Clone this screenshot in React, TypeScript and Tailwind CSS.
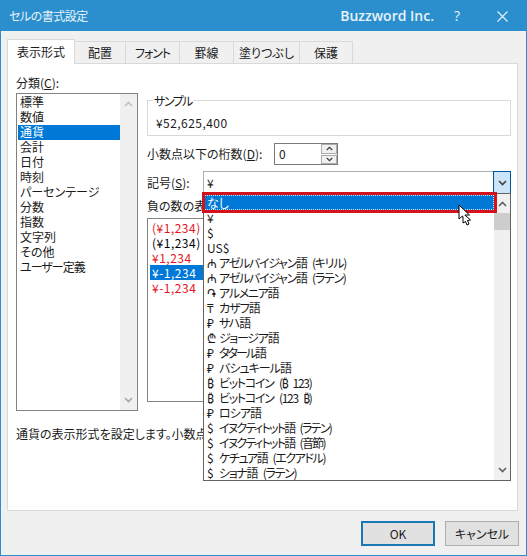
const TABS = [
  { label: '配置', width: 'w-[52px]', tracking: '' },
  { label: 'フォント', width: 'w-[55px]', tracking: 'tracking-[-1px]' },
  { label: '罫線', width: 'w-[55px]', tracking: '' },
  { label: '塗りつぶし', width: 'w-[67px]', tracking: '' },
  { label: '保護', width: 'w-[54px]', tracking: '' },
];

const CATEGORIES = ['標準', '数値', '通貨', '会計', '日付', '時刻', 'パーセンテージ', '分数', '指数', '文字列', 'その他', 'ユーザー定義'];

const NEGATIVES = [
  { label: '(¥1,234)', className: 'text-[#e81123]' },
  { label: '(¥1,234)', className: 'text-black' },
  { label: '¥1,234', className: 'text-[#e81123]' },
  { label: '¥-1,234', className: 'bg-[#0078d7] text-white' },
  { label: '¥-1,234', className: 'text-[#e81123]' },
];

const PLAIN_SYMBOLS = ['¥', '$', 'US$'];

const SYMBOLS = [
  { symbol: '₼', name: 'アゼルバイジャン語 (キリル)', tracking: 'tracking-[-1.3px]' },
  { symbol: '₼', name: 'アゼルバイジャン語 (ラテン)', tracking: 'tracking-[-1.3px]' },
  { symbol: '֏', name: 'アルメニア語', tracking: 'tracking-[-1.3px]' },
  { symbol: '₸', name: 'カザフ語', tracking: 'tracking-[-1px]' },
  { symbol: '₽', name: 'サハ語', tracking: 'tracking-[-1px]' },
  { symbol: '₾', name: 'ジョージア語', tracking: 'tracking-[-1.3px]' },
  { symbol: '₽', name: 'タタール語', tracking: 'tracking-[-2px]' },
  { symbol: '₽', name: 'バシュキール語', tracking: 'tracking-[-1px]' },
  { symbol: '₿', name: 'ビットコイン (₿ 123)', tracking: 'tracking-[-1.3px]' },
  { symbol: '₿', name: 'ビットコイン (123 ₿)', tracking: 'tracking-[-1.3px]' },
  { symbol: '₽', name: 'ロシア語', tracking: 'tracking-[-1px]' },
  { symbol: '$', name: 'イヌクティトット語 (ラテン)', tracking: 'tracking-[-1.7px]' },
  { symbol: '$', name: 'イヌクティトット語 (音節)', tracking: 'tracking-[-1.7px]' },
  { symbol: '$', name: 'ケチュア語 (エクアドル)', tracking: 'tracking-[-1.4px]' },
  { symbol: '$', name: 'ショナ語 (ラテン)', tracking: 'tracking-[-1.3px]' },
];

function Chevron({ up, className }: { up?: boolean; className: string }) {
  return (
    <svg width="9" height="6" viewBox="0 0 9 6" className={className}>
      <path d={up ? 'M1 5 L4.5 1.5 L8 5' : 'M1 1 L4.5 4.5 L8 1'} fill="none" stroke="currentColor" strokeWidth="1.6" />
    </svg>
  );
}

function Scrollbar({ thumb, className }: { thumb: boolean; className: string }) {
  return (
    <div className={`flex flex-col items-center justify-between bg-[#f0f0f0] py-[7px] relative ${className}`}>
      <Chevron up className={thumb ? 'text-[#606060]' : 'text-[#c0c0c0]'} />
      {thumb && <div className="absolute left-0 right-0 top-[19px] h-[17px] bg-[#cdcdcd]" />}
      <Chevron className={thumb ? 'text-[#606060]' : 'text-[#a6a6a6]'} />
    </div>
  );
}

function Cursor() {
  return (
    <svg width="16" height="24" viewBox="0 0 16 24" className="absolute left-[457px] top-[203px] z-30">
      <path d="M1 1 L1 15 L4.5 12 L7 17 L9.5 16 L7 11 L11.5 11 Z" fill="#fff" stroke="#000" strokeWidth="1" />
      <path d="M5 13 L5 19 L7.5 17.5 L9 21 L11 20 L9.5 16.5 L12.5 16 L8 12" fill="#fff" stroke="#000" strokeWidth="1" />
    </svg>
  );
}

export default function App() {
  return (
    <div className="relative w-[527px] h-[556px] flex flex-col border border-[#2b8fcd] bg-[#f0f0f0] text-[12px] leading-[14px] text-[#1a1a1a] [font-family:'Noto_Sans_CJK_JP','Noto_Sans',sans-serif] [font-feature-settings:'palt']">
      {/* Title bar */}
      <div className="h-[30px] shrink-0 flex items-center bg-[#2b8fcd] text-[#e6f3fa]">
        <span className="ml-[8px] text-[12px] tracking-[-0.5px]">セルの書式設定</span>
        <span className="ml-auto text-[14px] font-semibold [font-family:'Open_Sans',sans-serif]">Buzzword Inc.</span>
        <span className="ml-[18px] w-[10px] text-center text-[14px] [font-family:'Open_Sans',sans-serif]">?</span>
        <svg width="11" height="11" viewBox="0 0 11 11" className="ml-[35px] mr-[18px]">
          <path d="M0.5 0.5 L10.5 10.5 M10.5 0.5 L0.5 10.5" stroke="#e6f3fa" strokeWidth="1.1" />
        </svg>
      </div>

      <div className="flex-1 flex flex-col px-[6px] pt-[8px]">
        {/* Tabs */}
        <div className="flex items-end h-[24px]">
          <div className="relative z-10 w-[68px] h-[25px] -mb-px flex items-center justify-center bg-white border border-b-0 border-[#d9d9d9]">表示形式</div>
          {TABS.map((tab) => (
            <div key={tab.label} className={`${tab.width} ${tab.tracking} h-[22px] -ml-px first:ml-0 flex items-center justify-center bg-[#f0f0f0] border border-b-0 border-[#d9d9d9]`}>
              {tab.label}
            </div>
          ))}
        </div>

        {/* Panel */}
        <div className="w-[511px] h-[448px] bg-white border border-[#d9d9d9] pl-[8px]">
          <div className="flex">
            <div className="w-[122px] pt-[12px]">
              <div>分類(<span className="underline">C</span>):</div>
              <div className="mt-[3px] h-[318px] border border-[#828282] flex">
                <div className="flex-1 pt-[1px] pl-[1px]">
                  {CATEGORIES.map((c) => (
                    <div key={c} className={`h-[15px] pl-[2px] leading-[14px] ${c === '通貨' ? 'bg-[#0078d7] text-white' : ''} ${c === 'ユーザー定義' ? 'tracking-[-1px]' : ''}`}>{c}</div>
                  ))}
                </div>
                <Scrollbar thumb={false} className="w-[17px]" />
              </div>
            </div>

            <div className="w-[364px] ml-[9px] pt-[36px]">
              <div className="relative h-[36px] border border-[#d9d9d9] pt-[15px] pl-[8px] tracking-[0.45px]">
                <span className="absolute left-[5px] -top-[7px] bg-white px-[1px] tracking-[-1.5px]">サンプル</span>
                ¥52,625,400
              </div>

              <div className="mt-[7px] h-[22px] flex items-center">
                <div className="w-[127px]">小数点以下の桁数(<span className="underline">D</span>):</div>
                <div className="w-[64px] h-[22px] border border-[#7a7a7a] flex items-center pl-[4px]">
                  0
                  <div className="ml-auto w-[16px] h-full flex flex-col gap-px">
                    <div className="flex-1 flex items-center justify-center bg-[#f0f0f0] border border-[#adadad] text-[#404040]"><Chevron up className="w-[7px] h-[5px]" /></div>
                    <div className="flex-1 flex items-center justify-center bg-[#f0f0f0] border border-[#adadad] text-[#404040]"><Chevron className="w-[7px] h-[5px]" /></div>
                  </div>
                </div>
              </div>

              <div className="mt-[6px] h-[23px] flex items-center">
                <div className="w-[56px]">記号(<span className="underline">S</span>):</div>
                <div className="relative w-[308px] h-[23px] border border-[#adadad] flex items-center pl-[3px]">
                  ¥
                  <div className="absolute -right-px -top-px w-[18px] h-[23px] flex items-center justify-center bg-[#cce4f7] border border-[#005499] text-[#404040]">
                    <Chevron className="" />
                  </div>

                  {/* Open list lies over the negative number box */}
                  <div className="absolute z-20 -left-px top-[21px] w-[308px] h-[288px] bg-white border border-[#646464] flex">
                    <div className="flex-1">
                      <div className="h-[15px] mt-[1px] pl-[3px] leading-[15px] bg-[#0078d7] text-white outline-1 outline-dotted outline-[#cfe4f5] -outline-offset-1">なし</div>
                      {PLAIN_SYMBOLS.map((s) => (
                        <div key={s} className="h-[15px] pl-[3px] leading-[15px]">{s}</div>
                      ))}
                      {SYMBOLS.map((s) => (
                        <div key={s.name} className="h-[15px] pl-[3px] flex leading-[15px] whitespace-nowrap">
                          <span className="w-[12px]">{s.symbol}</span>
                          <span className={`${s.tracking} [word-spacing:4px]`}>{s.name}</span>
                        </div>
                      ))}
                    </div>
                    <Scrollbar thumb className="w-[16px]" />
                    <div className="absolute -left-[2px] -top-[2px] w-[295px] h-[21px] border-[3px] border-[#d3121c]" />
                  </div>
                </div>
              </div>

              <div className="mt-[5px]">負の数の表示形式(<span className="underline">N</span>):</div>
              <div className="mt-[5px] h-[184px] border border-[#828282] pt-[1px] pl-[2px] tracking-[0.5px]">
                {NEGATIVES.map((n, i) => (
                  <div key={i} className={`h-[15px] pl-[2px] leading-[15px] ${n.className}`}>{n.label}</div>
                ))}
              </div>
            </div>
          </div>

          <div className="mt-[16px] whitespace-nowrap">通貨の表示形式を設定します。小数点</div>
        </div>

        {/* Footer buttons */}
        <div className="mt-[10px] flex justify-end gap-[10px] pr-[1px]">
          <button className="w-[74px] h-[25px] bg-[#e1e1e1] border-2 border-[#1a78b4]">OK</button>
          <button className="w-[74px] h-[25px] bg-[#e1e1e1] border border-[#adadad]">キャンセル</button>
        </div>
      </div>

      <Cursor />
    </div>
  );
}
